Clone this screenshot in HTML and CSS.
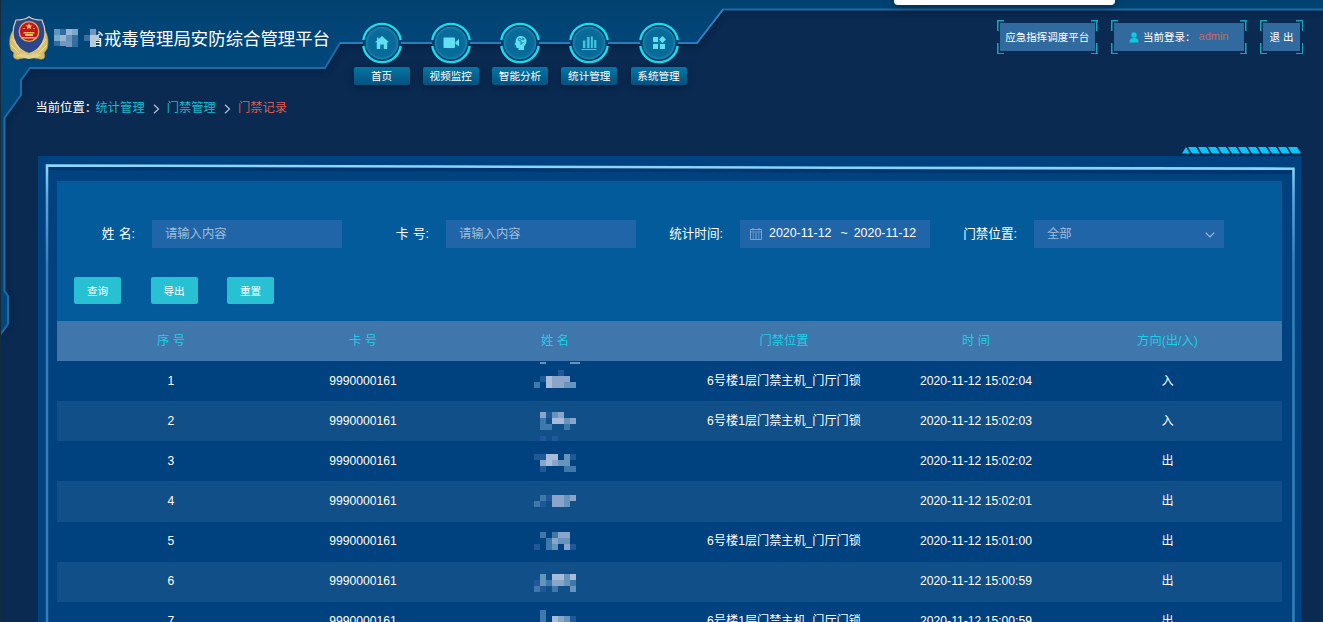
FILE: index.html
```html
<!DOCTYPE html>
<html lang="zh-CN">
<head>
<meta charset="utf-8">
<title>戒毒管理局安防综合管理平台</title>
<link rel="stylesheet" href="styles.css">
</head>
<body>
<svg class="backdrop" width="1323" height="622" viewBox="0 0 1323 622">
  <defs>
    <linearGradient id="head" x1="0" y1="0" x2="0" y2="1"><stop offset="0" stop-color="#01416f"/><stop offset=".12" stop-color="#014679"/><stop offset="1" stop-color="#014679"/></linearGradient>
    <filter id="soft" x="-5%" y="-5%" width="110%" height="115%"><feGaussianBlur stdDeviation="3"/></filter>
  </defs>
  <path d="M0 0H1323V12H725L699 47H342L327 72H31L23 82V97L6 120V292L10 297V326L0 338Z" fill="#051c3a" opacity=".6" filter="url(#soft)"/>
  <path d="M0 0H1323V9.500H723L697 43H340L325 68H30L21 80V95L4.500 118V291L8 296V324L0 335Z" fill="url(#head)"/>
  <path d="M1323 9.500H723L697 43H340L325 68H30L21 80V95L4.500 118V291L8 296V324L0 335" fill="none" stroke="#1f6ba8" stroke-width="2"/>
  <path d="M340 43H697L723 9.500" fill="none" stroke="#3183bd" stroke-width="1.500"/>
  <path d="M.5 0V622" stroke="#142c3e"/>
</svg>

<header class="header">
  <div class="brand">
    <svg class="emblem" width="40" height="45" viewBox="0 0 40 45">
      <path d="M4 15C0 19 0 29 2 34L5 37C3 41 6 44 10 43L20 41L31 43C35 44 37 41 35 37L38 33C40 27 39 19 36 15L31 30L20 38L8 30Z" fill="#d8bd62" stroke="#b39543" stroke-width=".6"/>
      <path d="M20 .7C17 3 12 4 7 4C4 11 3 17 5 23C7 30 12 35 20 38C28 35 33 30 35 23C37 17 36 11 33 4C28 4 23 3 20 .7Z" fill="#2c4687" stroke="#d8cfae" stroke-width="1.200"/>
      <circle cx="20" cy="15.500" r="9.800" fill="#c90f20" stroke="#d8b257" stroke-width="1.300"/>
      <path d="M20 7L21 9.300L23.500 9.500L21.600 11L22.200 13.300L20 12L17.800 13.300L18.400 11L16.500 9.500L19 9.300ZM15 16H25L26 17.500H14ZM16 18H24V20H16ZM13 21H27V22.500H13Z" fill="#e7c05a"/>
      <circle cx="15" cy="12.500" r=".8" fill="#e7c05a"/><circle cx="25" cy="12.500" r=".8" fill="#e7c05a"/>
      <path d="M4 27L14 35L20 37L26 35L36 27L34 37L27 41L20 42L13 41L6 37Z" fill="#d8c070"/>
      <path d="M3 23L11 34M2 29L10 37M37 23L29 34M38 29L30 37M8 40L17 38M32 40L23 38" stroke="#f0df98" stroke-width="1"/>
      <path d="M12 37L20 39L28 37L30 41L20 43L10 41Z" fill="#e2d08a"/>
    </svg>
    <h1 class="title">省戒毒管理局安防综合管理平台</h1>
    <svg class="title-mask" width="48" height="22" viewBox="0 0 48 22" shape-rendering="crispEdges">
      <path d="M32 0H42V22H32Z" fill="#014679"/>
      <path d="M0 1H6V7H0ZM12 7H18V13H12Z" fill="#6294bd"/>
      <path d="M6 1H12V7H6ZM0 13H6V18H0ZM18 13H24V19H18Z" fill="#2e6ea0"/>
      <path d="M0 7H6V13H0ZM18 1H24V7H18Z" fill="#79a9cb"/>
      <path d="M6 7H12V13H6ZM12 1H18V7H12Z" fill="#9ab5d5"/>
      <path d="M6 13H12V18H6ZM12 13H18V19H12Z" fill="#7397bb"/>
      <path d="M18 7H24V13H18ZM30 7H36V13H30Z" fill="#3c709c"/>
      <path d="M36 1H42V7H36Z" fill="#7197ba"/>
      <path d="M36 7H45V13H36ZM36 13H42V19H36Z" fill="#b5c9dd"/>
    </svg>
  </div>

  <nav class="nav">
    <a class="nav-item">
      <svg class="orb" viewBox="0 0 42 42"><use href="#orb"/><path d="M21 14L28 20.300H26.200V27H22.800V22.500H19.200V27H15.800V20.300H14L16 18.500V15.500H17.500V17.200Z" fill="#62dff0"/></svg>
      <span class="nav-label">首页</span>
    </a>
    <a class="nav-item">
      <svg class="orb" viewBox="0 0 42 42"><use href="#orb"/><path d="M14 15.500H24Q25 15.500 25 16.500V25Q25 26 24 26H14Q13.500 26 13.500 25V16.500Q13.500 15.500 14 15.500ZM25.500 20L29 17V24.500L25.500 21.800Z" fill="#62dff0"/></svg>
      <span class="nav-label">视频监控</span>
    </a>
    <a class="nav-item">
      <svg class="orb" viewBox="0 0 42 42"><use href="#orb"/><path d="M21.500 14C26 14 28 17 27.300 20.500C27 22 25 23.500 25 25V28H19.500V26H17.500L17 23.200L15.500 22.500L16.800 20C16.500 16.500 18.500 14 21.500 14Z" fill="#62dff0"/><g fill="none" stroke="#087fa8"><circle cx="20.600" cy="17.500" r="1.300"/><circle cx="24" cy="17" r=".9"/><path d="M22 19V22.500L24.500 20"/></g></svg>
      <span class="nav-label">智能分析</span>
    </a>
    <a class="nav-item">
      <svg class="orb" viewBox="0 0 42 42"><use href="#orb"/><path d="M15 18.500H17.300V26H15ZM19.200 15H21.500V26H19.200ZM23 14.500H24.800V26H23ZM26.200 18H28.300V26H26.200ZM13.500 27H28.500V28H13.500Z" fill="#43c7df"/></svg>
      <span class="nav-label">统计管理</span>
    </a>
    <a class="nav-item">
      <svg class="orb" viewBox="0 0 42 42"><use href="#orb"/><path d="M15.500 15H19.500Q20 15 20 15.500V19.500Q20 20 19.500 20H15.500Q15 20 15 19.500V15.500Q15 15 15.500 15ZM24.500 14L28 17.500L24.500 21L21 17.500ZM15.500 22H20V27H15.500Q15 27 15 26.500V22.500ZM22 22H26.500Q27 22 27 22.500V26.500Q27 27 26.500 27H22Z" fill="#62dff0"/></svg>
      <span class="nav-label">系统管理</span>
    </a>
  </nav>

  <div class="tools">
    <a class="tool tool-dispatch"><span class="tool-body">应急指挥调度平台</span></a>
    <a class="tool tool-user"><span class="tool-body"><svg class="person" width="10" height="11" viewBox="0 0 10 11"><circle cx="5" cy="3" r="2.700" fill="#08cbe0"/><path d="M.5 10.500C.5 7 2 6 5 6S9.500 7 9.500 10.500Z" fill="#08cbe0"/></svg>当前登录：<b class="user-name">admin</b></span></a>
    <a class="tool tool-exit"><span class="tool-body">退 出</span></a>
  </div>
</header>

<svg width="0" height="0" class="defs">
  <defs>
    <radialGradient id="disc"><stop offset="0" stop-color="#0e7fa9"/><stop offset=".5" stop-color="#076998"/><stop offset=".85" stop-color="#0b6c9c"/><stop offset="1" stop-color="#1286ae"/></radialGradient>
    <g id="orb">
      <circle cx="21" cy="21" r="19" fill="#033d6d"/>
      <circle cx="21" cy="21" r="16" fill="url(#disc)" stroke="#1586ad" stroke-width=".8"/>
      <path d="M2.300 18A18.900 18.900 0 0 1 39.700 18M39.700 24A18.900 18.900 0 0 1 2.300 24" fill="none" stroke="#19dced" stroke-width="2.400"/>
    </g>
  </defs>
</svg>

<div class="crumbs">
  <span>当前位置：</span><a>统计管理</a><svg class="sep" width="7" height="10" viewBox="0 0 7 10"><path d="M1 .8L5.500 5L1 9.200"/></svg><a>门禁管理</a><svg class="sep" width="7" height="10" viewBox="0 0 7 10"><path d="M1 .8L5.500 5L1 9.200"/></svg><em>门禁记录</em>
</div>

<main class="panel">
  <svg class="panel-frame" width="1263" height="475" viewBox="0 0 1263 475">
    <defs>
      <linearGradient id="edge" gradientUnits="userSpaceOnUse" x1="0" y1="8" x2="0" y2="110"><stop offset="0" stop-color="#8ed9ff"/><stop offset=".3" stop-color="#5aaade"/><stop offset="1" stop-color="#2f80ba"/></linearGradient>
    </defs>
    <path d="M9 470V10M1255.500 14V470" stroke="#062e68" stroke-width="5" opacity=".3" fill="none"/>
    <path d="M9 12L1255 16" stroke="#022a5c" stroke-width="4" opacity=".5"/>
    <path d="M9 475V9.500L400 10.500L800 11.700L1255.500 12.700V475" fill="none" stroke="url(#edge)" stroke-width="2.600"/>
    <path d="M1144 -2.500L1148 -9L1152 -2.500Z" fill="#0bc4f8"/>
    <path d="M1150 -9H1158L1162 -2.500H1154ZM1160 -9H1168L1172 -2.500H1164ZM1170 -9H1178L1182 -2.500H1174ZM1180 -9H1188L1192 -2.500H1184ZM1190 -9H1198L1202 -2.500H1194ZM1200 -9H1208L1212 -2.500H1204ZM1210 -9H1218L1222 -2.500H1214ZM1220 -9H1228L1232 -2.500H1224ZM1230 -9H1238L1242 -2.500H1234ZM1240 -9H1248L1252 -2.500H1244ZM1250 -9H1259L1263 -2.500H1254Z" fill="#0bc4f8"/>
  </svg>

  <section class="content">
    <form class="filters">
      <div class="fields">
        <div class="field"><label>姓 名:</label><div class="box ph">请输入内容</div></div>
        <div class="field"><label>卡 号:</label><div class="box ph">请输入内容</div></div>
        <div class="field"><label>统计时间:</label><div class="box date"><svg class="cal" width="12" height="12" viewBox="0 0 12 12"><path d="M.5 1.500H11.500V11.500H.5ZM.5 4H11.500M3 0V2.500M9 0V2.500M2.500 6H4M5 6H7M8 6H9.500M2.500 8H4M5 8H7M8 8H9.500M2.500 10H4M5 10H7M8 10H9.500"/></svg><span>2020-11-12</span><i>~</i><span>2020-11-12</span></div></div>
        <div class="field"><label>门禁位置:</label><div class="box ph select">全部<svg class="caret" width="10" height="6" viewBox="0 0 10 6"><path d="M.7 .7L5 5L9.300 .7"/></svg></div></div>
      </div>
      <div class="actions"><button type="button">查询</button><button type="button">导出</button><button type="button">重置</button></div>
    </form>

    <div class="table">
      <div class="row thead"><span>序 号</span><span>卡 号</span><span>姓 名</span><span>门禁位置</span><span>时 间</span><span>方向(出/入)</span></div>
      <div class="row"><span>1</span><span>9990000161</span><span><svg class="mosaic" viewBox="0 0 48 40"><path class="m3" d="M6 1h6v2H6zM36 1h10v2H36zM36 21h6v6h-6z"/><path class="m2" d="M0 21h6v6H0z"/><path class="m1" d="M6 15h6v6H6zM24 9h6v6h-6z"/><path class="m5" d="M12 15h6v12h-6z"/><path class="m4" d="M18 15h12v12H18zM30 15h6v6h-6z"/><path class="m3" d="M30 21h6v6h-6z"/></svg></span><span>6号楼1层门禁主机_门厅门锁</span><span>2020-11-12 15:02:04</span><span>入</span></div>
      <div class="row"><span>2</span><span>9990000161</span><span><svg class="mosaic" viewBox="0 0 48 40"><path class="m1" d="M12 11h6v6h-6zM6 35h6v5H6zM18 35h6v5h-6z"/><path class="m4" d="M6 11h6v6H6zM24 11h6v6h-6zM36 17h6v6h-6z"/><path class="m2" d="M6 17h6v12H6zM12 23h6v6h-6zM30 23h6v6h-6z"/><path class="m3" d="M18 11h6v6h-6zM30 17h6v6h-6z"/><path class="m5" d="M18 17h12v6H18z"/></svg></span><span>6号楼1层门禁主机_门厅门锁</span><span>2020-11-12 15:02:03</span><span>入</span></div>
      <div class="row"><span>3</span><span>9990000161</span><span><svg class="mosaic" viewBox="0 0 48 40"><path class="m1" d="M0 13h12v6H0zM36 13h6v6h-6zM6 25h6v6H6z"/><path class="m5" d="M12 13h6v12h-6zM18 13h6v6h-6z"/><path class="m4" d="M6 19h6v6H6zM18 19h6v6h-6z"/><path class="m3" d="M30 13h6v12h-6zM24 19h6v6h-6z"/><path class="m2" d="M30 25h12v6H30z"/></svg></span><span></span><span>2020-11-12 15:02:02</span><span>出</span></div>
      <div class="row"><span>4</span><span>9990000161</span><span><svg class="mosaic" viewBox="0 0 48 40"><path class="m2" d="M6 14h6v6H6zM0 20h6v6H0z"/><path class="m1" d="M12 14h6v6h-6zM6 20h6v6H6z"/><path class="m4" d="M18 14h12v12H18zM36 14h6v6h-6z"/><path class="m3" d="M30 14h6v12h-6z"/></svg></span><span></span><span>2020-11-12 15:02:01</span><span>出</span></div>
      <div class="row"><span>5</span><span>9990000161</span><span><svg class="mosaic" viewBox="0 0 48 40"><path class="m2" d="M6 10h6v6H6zM18 10h6v6h-6zM12 16h6v12h-6z"/><path class="m4" d="M24 10h12v6H24zM18 16h6v6h-6zM30 22h6v6h-6z"/><path class="m3" d="M24 16h12v6H24zM18 22h6v6h-6z"/><path class="m1" d="M0 22h6v6H0zM36 22h6v6h-6z"/></svg></span><span>6号楼1层门禁主机_门厅门锁</span><span>2020-11-12 15:01:00</span><span>出</span></div>
      <div class="row"><span>6</span><span>9990000161</span><span><svg class="mosaic" viewBox="0 0 48 40"><path class="m3" d="M6 12h6v12H6zM30 12h6v12h-6zM36 24h6v6h-6z"/><path class="m5" d="M18 12h12v6H18zM36 12h6v6h-6z"/><path class="m4" d="M18 18h12v6H18z"/><path class="m2" d="M12 18h6v6h-6zM36 18h6v6h-6zM0 24h6v6H0zM18 24h6v6h-6z"/><path class="m1" d="M0 18h6v6H0zM6 24h6v6H6z"/></svg></span><span></span><span>2020-11-12 15:00:59</span><span>出</span></div>
      <div class="row"><span>7</span><span>9990000161</span><span><svg class="mosaic" viewBox="0 0 48 40"><path class="m2" d="M6 8h6v12H6z"/><path class="m5" d="M18 14h6v12h-6z"/><path class="m4" d="M24 14h6v12h-6z"/><path class="m3" d="M30 14h6v12h-6z"/><path class="m1" d="M36 14h6v12h-6z"/></svg></span><span>6号楼1层门禁主机_门厅门锁</span><span>2020-11-12 15:00:59</span><span>出</span></div>
    </div>
  </section>
</main>
<div class="top-tab"></div>
</body>
</html>
```
FILE: styles.css
```css
* { box-sizing: border-box; }
html, body { margin: 0; height: 622px; overflow: hidden; }
body {
  position: relative;
  background: #0a2a51;
  color: #fff;
  font: 12.15px/1.4 "Liberation Sans", "Noto Sans CJK SC", sans-serif;
}
.backdrop { position: absolute; left: 0; top: 0; z-index: -1; }
.defs { display: block; }
.header { display: flex; align-items: flex-start; height: 95px; padding-left: 9px; }

.brand { position: relative; display: flex; width: 344.5px; padding-top: 16px; }
.emblem { flex: none; }
.title {
  margin: 10px 0 0 37.5px;
  font-size: 17.4px;
  font-weight: 400;
  line-height: 26px;
  white-space: nowrap;
}
.title-mask { position: absolute; left: 45px; top: 28px; }

.nav { display: flex; gap: 13.250px; padding-top: 22px; }
.nav-item { display: flex; flex-direction: column; align-items: center; width: 56px; }
.orb { display: block; width: 42px; height: 42px; }
.nav-label {
  width: 56px;
  height: 18px;
  margin-top: 3px;
  border-radius: 2px;
  background: linear-gradient(#0576a4, #03517f);
  box-shadow: 0 2px 7px rgba(2, 20, 45, .6);
  font-size: 10.6px;
  line-height: 18px;
  text-align: center;
}

.tools { display: flex; gap: 13.500px; margin: 20px 20px 0 auto; }
.tool {
  --c: #12a7bd;
  --h: linear-gradient(var(--c), var(--c));
  height: 34px;
  padding: 3px;
  background:
    var(--h) 0 0 / 7px 1.500px, var(--h) 100% 0 / 7px 1.500px,
    var(--h) 0 100% / 7px 1.500px, var(--h) 100% 100% / 7px 1.500px,
    var(--h) 0 0 / 1.500px 11px, var(--h) 100% 0 / 1.500px 11px,
    var(--h) 0 100% / 1.500px 11px, var(--h) 100% 100% / 1.500px 11px;
  background-repeat: no-repeat;
}
.tool-dispatch { width: 100.500px; }
.tool-user { width: 135.500px; }
.tool-exit { width: 43px; }
.tool-body {
  display: flex;
  align-items: center;
  justify-content: center;
  height: 28px;
  background: #316a9e;
  font-size: 10.5px;
  white-space: pre;
}
.person { margin-right: 4px; }
.user-name { margin-left: 3px; color: #d3625f; font-size: 11px; font-weight: 400; }

.crumbs { display: flex; align-items: center; height: 28px; padding-left: 35.500px; font-size: 12.3px; white-space: nowrap; }
.crumbs span { width: 60px; }
.crumbs a { color: #16bad3; }
.crumbs em { color: #dc5c52; font-style: normal; }
.sep { margin: 0 7px 0 8px; fill: none; stroke: #b4c3d2; stroke-width: 1.200; }

.panel { position: relative; width: 1263px; height: 480px; margin: 33px 0 0 38px; padding: 25px 19px 0; background: #00417f; }
.panel-frame { position: absolute; left: 0; top: 0; overflow: visible; }
.content { position: relative; }
.filters { height: 140px; padding-top: 39px; background: #045b9b; }
.fields { display: grid; grid-template-columns: 285px 294px 294px 294px; }
.field { display: flex; align-items: center; height: 28px; }
.field label { flex: 1; padding: 2px 17px 0 0; font-size: 12.600px; text-align: right; word-spacing: 1px; }
.box { display: flex; align-items: center; width: 190px; height: 28px; padding: 0 13px; background: #2065a8; }
.ph { padding-top: 2px; color: #a3bdd8; font-size: 12.300px; }
.select { justify-content: space-between; padding-right: 9px; }
.date { padding: 0 10px; font-size: 12.400px; }
.cal { margin-right: 7px; fill: none; stroke: #94b2d2; stroke-width: .8; }
.date i { margin: 0 6px 0 9px; font-style: normal; }
.caret { fill: none; stroke: #a3bdd8; stroke-width: 1.200; }
.actions { display: flex; gap: 29.500px; padding: 28.500px 0 0 17px; }
.actions button {
  width: 47px;
  height: 27.500px;
  padding: 0;
  border: 0;
  border-radius: 2px;
  background: #28c1d3;
  color: #fff;
  font: 10.600px "Liberation Sans", "Noto Sans CJK SC", sans-serif;
}

.row { display: grid; grid-template-columns: 228px 156px 228px 230px 154px 229px; align-items: center; height: 40.150px; text-align: center; white-space: nowrap; }
.row:nth-child(odd) { background: #104f88; }
.row.thead { height: 40px; padding-top: 2px; background: #3f76ab; color: #1bd0e6; font-size: 12.300px; }
.mosaic { display: block; width: 48px; height: 40px; margin-left: 93px; shape-rendering: crispEdges; }
.m1 { fill: #21589a; }
.m2 { fill: #3d79aa; }
.m3 { fill: #6595bd; }
.m4 { fill: #8ba5ca; }
.m5 { fill: #a8bcda; }

.top-tab { position: absolute; left: 894px; top: 0; width: 221px; height: 5px; border-radius: 0 0 4px 4px; background: #fff; box-shadow: 0 2px 8px rgba(0, 10, 30, .6); }
```
